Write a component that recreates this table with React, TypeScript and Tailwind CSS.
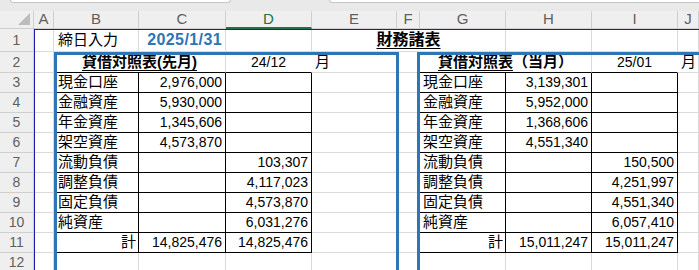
import React from 'react';

const FONT = "font-['Liberation_Sans','Noto_Sans_CJK_JP',sans-serif]";

const COLS = ['A', 'B', 'C', 'D', 'E', 'F', 'G', 'H', 'I', 'J'];

const LEFT = [
  ['現金口座', '2,976,000', ''],
  ['金融資産', '5,930,000', ''],
  ['年金資産', '1,345,606', ''],
  ['架空資産', '4,573,870', ''],
  ['流動負債', '', '103,307'],
  ['調整負債', '', '4,117,023'],
  ['固定負債', '', '4,573,870'],
  ['純資産', '', '6,031,276'],
  ['計', '14,825,476', '14,825,476'],
];

const RIGHT = [
  ['現金口座', '3,139,301', ''],
  ['金融資産', '5,952,000', ''],
  ['年金資産', '1,368,606', ''],
  ['架空資産', '4,551,340', ''],
  ['流動負債', '', '150,500'],
  ['調整負債', '', '4,251,997'],
  ['固定負債', '', '4,551,340'],
  ['純資産', '', '6,057,410'],
  ['計', '15,011,247', '15,011,247'],
];

const cell = 'flex items-center border-r border-b border-[#dadada] whitespace-nowrap min-w-0';
const hdr = 'flex items-center justify-center border-r border-b border-[#cfcfcf] bg-[#efefef] text-[#5f5f5f]';
const blk = 'border-r-black border-b-black';

const RowHead: React.FC<{ n: number }> = ({ n }) => (
  <div className={`${hdr} text-[14px]`}>{n}</div>
);

const Label: React.FC<{ text: string; pad: string }> = ({ text, pad }) => (
  <div className={`${cell} ${blk} text-[15px] ${text === '計' ? 'justify-end pr-[2px]' : pad}`}>{text}</div>
);

const Num: React.FC<{ v: string }> = ({ v }) => (
  <div className={`${cell} ${blk} justify-end pr-[3px] text-[14px]`}>{v}</div>
);

export default function App() {
  return (
    <div className={`w-[699px] h-[270px] overflow-hidden bg-white text-black ${FONT}`}>
      {/* ribbon bottom / formula bar */}
      <div className="h-[11px] bg-[#e9e9e9] flex items-start">
        <div className="ml-[10px] w-[221px] h-[3px] bg-white border border-t-0 border-[#c6c6c6] rounded-b-[4px]" />
        <div className="ml-[98px] flex-1 h-[3px] bg-white border border-t-0 border-r-0 border-[#c6c6c6] rounded-bl-[4px]" />
      </div>

      <div className="relative">
        <div className="grid grid-cols-[34px_20px_85px_87px_86px_85px_23px_86px_86px_86px_1fr] grid-rows-[18px_23px_21px_repeat(10,20px)]">
          {/* column headers */}
          <div className={`${hdr} relative`}>
            <svg width="12" height="12" viewBox="0 0 12 12" className="absolute right-[3px] bottom-[3px]">
              <polygon points="12,0 12,12 0,12" fill="#bcbcbc" />
            </svg>
          </div>
          {COLS.map((c) =>
            c === 'D' ? (
              <div key={c} className={`${hdr} bg-[#dedede] text-[#217346] border-b-2 border-b-[#217346] text-[15px]`}>{c}</div>
            ) : (
              <div key={c} className={`${hdr} text-[15px]`}>{c}</div>
            )
          )}

          {/* row 1 */}
          <RowHead n={1} />
          <div className={cell} />
          <div className={`${cell} pl-[4px] text-[15px]`}>締日入力</div>
          <div className={`${cell} justify-end pr-[3px] text-[16px] font-bold tracking-[0.4px] text-[#2e75b6]`}>2025/1/31</div>
          <div className={cell} />
          <div className={`${cell} col-span-3 justify-center text-[16px] font-bold`}>
            <span className="underline underline-offset-[3px]">財務諸表</span>
          </div>
          <div className={cell} />
          <div className={cell} />
          <div className={cell} />

          {/* row 2 */}
          <RowHead n={2} />
          <div className={cell} />
          <div className={`${cell} col-span-2 justify-center border-b-black text-[15px] font-bold`}>
            <span className="underline underline-offset-[3px]">貸借対照表(先月)</span>
          </div>
          <div className={`${cell} border-r-transparent border-b-black justify-center text-[14px]`}>24/12</div>
          <div className={`${cell} pl-[3px] text-[15px]`}>月</div>
          <div className={cell} />
          <div className={`${cell} col-span-2 justify-center border-b-black text-[15px] font-bold`}>
            <span>
              <span className="underline underline-offset-[3px]">貸借対照表</span>（当月）
            </span>
          </div>
          <div className={`${cell} border-r-transparent border-b-black justify-center text-[14px]`}>25/01</div>
          <div className={`${cell} pl-[3px] text-[15px]`}>月</div>

          {/* rows 3-11 */}
          {LEFT.map((l, i) => {
            const r = RIGHT[i];
            return (
              <React.Fragment key={i}>
                <RowHead n={i + 3} />
                <div className={cell} />
                <Label text={l[0]} pad="pl-[4px]" />
                <Num v={l[1]} />
                <Num v={l[2]} />
                <div className={cell} />
                <div className={cell} />
                <Label text={r[0]} pad="pl-[3px]" />
                <Num v={r[1]} />
                <Num v={r[2]} />
                <div className={cell} />
              </React.Fragment>
            );
          })}

          {/* row 12 */}
          <RowHead n={12} />
          {COLS.map((c) => (
            <div key={c} className={cell} />
          ))}
        </div>

        {/* frozen-pane lines */}
        <div className="absolute left-[34px] right-0 top-[18px] h-px bg-[#1c1cb0]" />
        <div className="absolute left-[34px] top-[18px] bottom-0 w-px bg-[#1c1cb0]" />

        {/* table frames */}
        <div className="absolute left-[54px] top-[41px] w-[345px] h-[260px] border-[3px] border-b-0 border-[#2e75b6]" />
        <div className="absolute left-[417px] top-[41px] w-[300px] h-[260px] border-[3px] border-b-0 border-r-0 border-[#2e75b6]" />
      </div>
    </div>
  );
}
